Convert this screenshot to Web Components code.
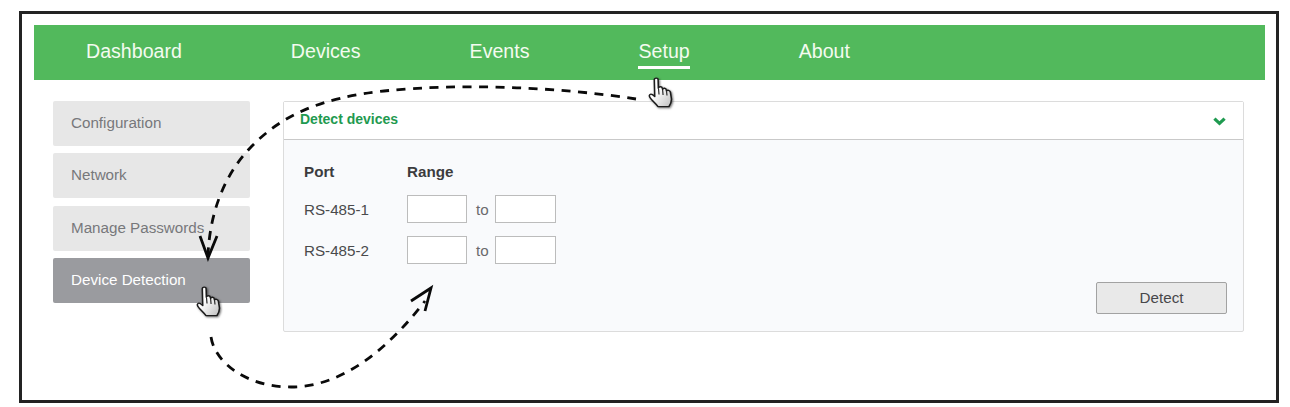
<!DOCTYPE html>
<html>
<head>
<meta charset="utf-8">
<title>Device Detection</title>
<style>
  html, body { margin: 0; background: #fff; }
  body { font-family: "Liberation Sans", Arial, sans-serif; width: 1290px; height: 407px; overflow: hidden; }
</style>
</head>
<body>
<app-frame>
  <top-nav>
    <nav-link>Dashboard</nav-link>
    <nav-link>Devices</nav-link>
    <nav-link>Events</nav-link>
    <nav-link active>Setup</nav-link>
    <nav-link>About</nav-link>
  </top-nav>
  <div slot="side">
    <side-item>Configuration</side-item>
    <side-item>Network</side-item>
    <side-item>Manage Passwords</side-item>
    <side-item active>Device Detection</side-item>
  </div>
  <detect-panel slot="main"></detect-panel>
  <flow-arrows slot="over"></flow-arrows>
  <hand-cursor slot="over" style="left:626px;top:63px"></hand-cursor>
  <hand-cursor slot="over" style="left:174px;top:272px"></hand-cursor>
</app-frame>

<script>
class AppFrame extends HTMLElement {
  constructor() {
    super();
    this.attachShadow({ mode: "open" });
    this.shadowRoot.innerHTML = `
    <style>
      :host {
        display: block;
        position: relative;
        box-sizing: border-box;
        width: 1260px;
        height: 392px;
        margin: 11px 0 0 19px;
        border: 3px solid #232323;
        padding: 11px 11px 0 12px;
      }
      .content {
        display: flex;
        align-items: flex-start;
        gap: 33px;
        padding: 21px 21px 0 19px;
      }
      .side { flex: 0 0 197px; }
      .main { flex: 1; }
    </style>
    <slot></slot>
    <div class="content">
      <div class="side"><slot name="side"></slot></div>
      <div class="main"><slot name="main"></slot></div>
    </div>
    <slot name="over"></slot>
    `;
  }
}

class TopNav extends HTMLElement {
  constructor() {
    super();
    this.attachShadow({ mode: "open" });
    this.shadowRoot.innerHTML = `
    <style>
      :host {
        display: flex;
        align-items: center;
        gap: 109px;
        height: 55px;
        padding-left: 52px;
        background: #52b95c;
      }
    </style>
    <slot></slot>
    `;
  }
}

class NavLink extends HTMLElement {
  constructor() {
    super();
    this.attachShadow({ mode: "open" });
    this.shadowRoot.innerHTML = `
    <style>
      :host {
        display: block;
        box-sizing: border-box;
        height: 30px;
        margin-top: 2px;
        font-size: 19.6px;
        line-height: 24px;
        color: #f4fbf0;
      }
      :host([active]) { border-bottom: 3.5px solid #fff; }
    </style>
    <slot></slot>
    `;
  }
}

class SideItem extends HTMLElement {
  constructor() {
    super();
    this.attachShadow({ mode: "open" });
    this.shadowRoot.innerHTML = `
    <style>
      :host {
        display: block;
        box-sizing: border-box;
        height: 45px;
        margin-bottom: 7.3px;
        padding-left: 18px;
        border-radius: 2px;
        background: #e7e7e7;
        color: #77787b;
        font-size: 15.2px;
        line-height: 44.6px;
      }
      :host([active]) {
        background: #9a9b9f;
        color: #fff;
      }
    </style>
    <slot></slot>
    `;
  }
}

class DetectPanel extends HTMLElement {
  constructor() {
    super();
    this.attachShadow({ mode: "open" });
    this.shadowRoot.innerHTML = `
    <style>
      :host {
        display: block;
        box-sizing: border-box;
        height: 231px;
        border: 1px solid #dcdcdc;
        border-radius: 2px;
        background: #f9fafc;
        color: #4a4a4c;
        font-size: 15.2px;
      }
      .head {
        display: flex;
        align-items: center;
        justify-content: space-between;
        box-sizing: border-box;
        height: 38px;
        padding: 0 17px 3px 16px;
        background: #fff;
        border-bottom: 1px solid #c9c9c9;
        color: #1f9a50;
        font-size: 14px;
        font-weight: bold;
      }
      .head svg { display: block; margin-top: 4px; }
      .body {
        display: flex;
        flex-direction: column;
        padding: 22px 16px 0 20px;
      }
      .row { display: flex; align-items: center; }
      .row + .row { margin-top: 13px; }
      .titles { height: 18px; margin-bottom: 2px; font-weight: bold; color: #3c3c3e; }
      .port { width: 103px; }
      input {
        box-sizing: border-box;
        width: 60px;
        height: 28px;
        margin: 0;
        padding: 0;
        border: 1px solid #bcbcbc;
        border-radius: 0;
        background: #fff;
      }
      input.to { width: 61px; }
      .sep { width: 28px; padding-left: 9px; box-sizing: border-box; color: #6a6a6c; }
      .actions { display: flex; justify-content: flex-end; margin-top: 18px; }
      button {
        box-sizing: border-box;
        width: 131px;
        height: 32px;
        padding: 0 0 2px;
        border: 1px solid #a2a2a2;
        border-radius: 2px;
        background: #e9e9e9;
        color: #47474a;
        font: 15.2px "Liberation Sans", Arial, sans-serif;
      }
    </style>
    <div class="head">
      <span>Detect devices</span>
      <svg width="13" height="9" viewBox="0 0 13 9"><path d="M1.4 1.6 L6.5 6.4 L11.6 1.6" fill="none" stroke="#1f9a50" stroke-width="3.2"/></svg>
    </div>
    <div class="body">
      <div class="row titles"><span class="port">Port</span><span>Range</span></div>
      <div class="row"><span class="port">RS-485-1</span><input><span class="sep">to</span><input class="to"></div>
      <div class="row"><span class="port">RS-485-2</span><input><span class="sep">to</span><input class="to"></div>
      <div class="actions"><button>Detect</button></div>
    </div>
    `;
  }
}

// the dashed arrows sit over the whole frame, coords are frame relative
class FlowArrows extends HTMLElement {
  constructor() {
    super();
    this.attachShadow({ mode: "open" });
    this.shadowRoot.innerHTML = `
    <style>
      :host { position: absolute; left: -3px; top: -3px; width: 1260px; height: 392px; pointer-events: none; }
      svg { display: block; }
      path { fill: none; stroke: #0a0a0a; stroke-width: 2.8; }
    </style>
    <svg width="1260" height="392" viewBox="0 0 1260 392">
      <path stroke-dasharray="9 7.5" d="M617 88 C540 76 440 72 365 80 C300 87 262 105 232 136 C206 163 191 200 189 244"/>
      <path d="M181 225 L189 247 L198 225"/>
      <path stroke-dasharray="9 7.5" d="M192 326 C196 352 228 376 272 376 C326 376 372 334 406 290"/>
      <path d="M392 290 L412 277 L406 300"/>
    </svg>
    `;
  }
}

class HandCursor extends HTMLElement {
  constructor() {
    super();
    this.attachShadow({ mode: "open" });
    this.shadowRoot.innerHTML = `
    <style>
      :host { position: absolute; width: 27px; height: 31px; filter: drop-shadow(1.5px 1.5px 1px rgba(0,0,0,.55)); }
      svg { display: block; }
    </style>
    <svg width="27" height="31" viewBox="0 0 24 31" preserveAspectRatio="none">
      <defs>
        <linearGradient id="g" x1="0" y1="0" x2="1" y2="1">
          <stop offset="0.4" stop-color="#fff"/>
          <stop offset="1" stop-color="#bdbdbd"/>
        </linearGradient>
      </defs>
      <path fill="url(#g)" stroke="#1b1b1b" stroke-width="1.4" stroke-linejoin="round"
        d="M5.6 2.8 C5.6 .6 9 .6 9 2.8 L9.2 11.2 C9.6 9.2 12.4 9.2 12.8 11.4 L13 12.4 C13.6 10.6 16 11 16.3 13 L16.4 14 C17.2 12.6 19.6 13.2 19.9 15.2 L20.8 21.5 C21.2 25 19.8 27.6 18.6 29.6 L8.8 29.6 C7.6 26.6 3.8 24.4 1.6 20.2 C.5 18 2.2 16.4 3.8 17.6 L6 19.6 Z"/>
      <path fill="none" stroke="#1b1b1b" stroke-width="1" d="M9.4 12 L9.8 17.5 M13 12.6 L13.4 18 M16.5 14.2 L16.9 18.5"/>
    </svg>
    `;
  }
}

customElements.define("app-frame", AppFrame);
customElements.define("top-nav", TopNav);
customElements.define("nav-link", NavLink);
customElements.define("side-item", SideItem);
customElements.define("detect-panel", DetectPanel);
customElements.define("flow-arrows", FlowArrows);
customElements.define("hand-cursor", HandCursor);
</script>
</body>
</html>
